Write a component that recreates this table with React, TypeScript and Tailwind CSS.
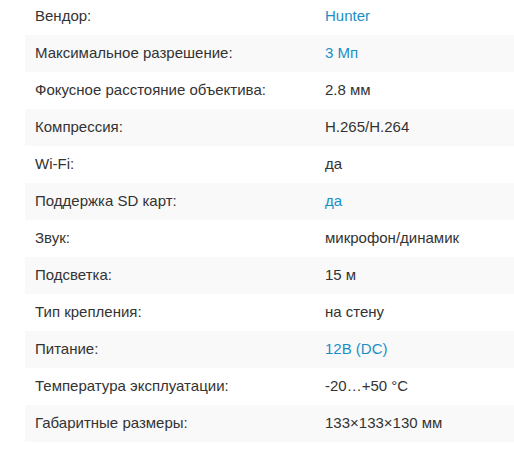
import React from 'react';

const specs = [
  { label: 'Вендор:', value: 'Hunter', link: true },
  { label: 'Максимальное разрешение:', value: '3 Мп', link: true },
  { label: 'Фокусное расстояние объектива:', value: '2.8 мм' },
  { label: 'Компрессия:', value: 'H.265/H.264' },
  { label: 'Wi-Fi:', value: 'да' },
  { label: 'Поддержка SD карт:', value: 'да', link: true },
  { label: 'Звук:', value: 'микрофон/динамик' },
  { label: 'Подсветка:', value: '15 м' },
  { label: 'Тип крепления:', value: 'на стену' },
  { label: 'Питание:', value: '12В (DC)', link: true },
  { label: 'Температура эксплуатации:', value: '-20…+50 °C' },
  { label: 'Габаритные размеры:', value: '133×133×130 мм' },
];

const App = () => {
  return (
    <div className="w-[514px] h-[472px] overflow-hidden bg-white font-['Liberation_Sans',Arial,sans-serif] text-[15px] text-[#333]">
      <div className="ml-[25px] -mt-[2px]">
        {specs.map((s, i) => (
          <div
            key={s.label}
            className={`flex items-center h-[37px] ${i % 2 === 1 ? 'bg-[#f9f9f9]' : 'bg-white'}`}
          >
            <div className="w-[300px] pl-[10px]">{s.label}</div>
            <div className={s.link ? 'text-[#1a8fc6]' : ''}>{s.value}</div>
          </div>
        ))}
      </div>
    </div>
  );
};

export default App;
